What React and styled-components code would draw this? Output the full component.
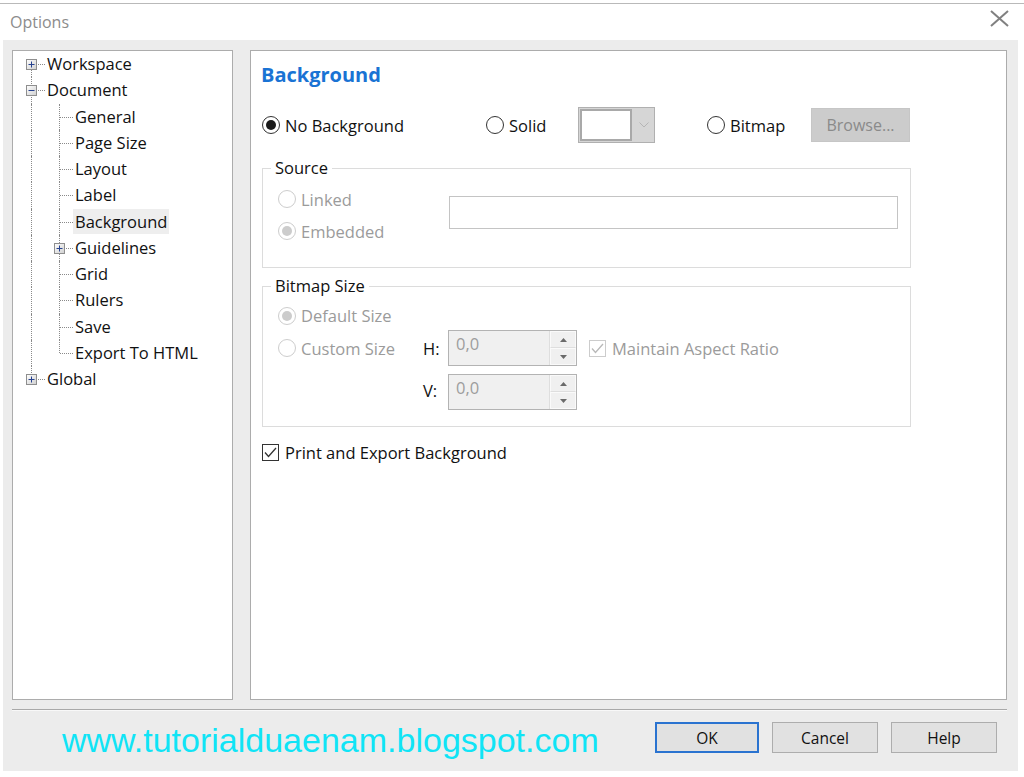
import React from 'react';
import styled, { createGlobalStyle } from 'styled-components';

const GlobalStyle = createGlobalStyle`
  html, body { margin: 0; padding: 0; background: #fff; }
  body { font-family: "Open Sans", "Noto Sans", sans-serif; color: #000; }
  * { box-sizing: border-box; }
`;

const Window = styled.div`
  width: 1024px;
  height: 777px;
  display: flex;
  flex-direction: column;
  background: #fff;
  overflow: hidden;
`;

const TopEdge = styled.div`
  height: 4px;
  border-bottom: 1px solid #b9b9b9;
`;

const TitleBar = styled.div`
  height: 36px;
  display: flex;
  align-items: center;
  justify-content: space-between;
  padding: 0 15px 0 10px;
`;

const Title = styled.span`
  font-size: 16px;
  color: #8c8c8c;
`;

const CloseButton = styled.span`
  display: flex;
  width: 19px;
  height: 17px;
  margin-top: -7px;
`;

const Body = styled.div`
  flex: 1;
  margin: 0 6px 6px 3px;
  background: #ececec;
  padding: 10px 11px 0 9px;
  display: flex;
  flex-direction: column;
`;

const Main = styled.div`
  display: flex;
  gap: 17px;
  height: 650px;
`;

const TreePanel = styled.div`
  width: 221px;
  background: #fff;
  border: 1px solid #acacac;
  padding: 0 0 0 4px;
  font-size: 16.5px;
`;

const TreeRow = styled.div`
  display: flex;
  align-items: stretch;
  height: 26.25px;
`;

const Guide = styled.div`
  position: relative;
  width: 28px;
  flex: none;
  &::before {
    content: '';
    position: absolute;
    left: 14px;
    top: 0;
    bottom: 0;
    border-left: 1px dotted #8a8a8a;
    display: ${(p) => (p.$line ? 'block' : 'none')};
  }
`;

const Connector = styled.div`
  position: relative;
  width: 28px;
  flex: none;
  &::before {
    content: '';
    position: absolute;
    left: 14px;
    top: ${(p) => (p.$first ? '50%' : '0')};
    bottom: ${(p) => (p.$last ? '50%' : '0')};
    border-left: 1px dotted #8a8a8a;
  }
  &::after {
    content: '';
    position: absolute;
    left: 15px;
    right: 0;
    top: 50%;
    border-top: 1px dotted #8a8a8a;
  }
`;

const Expander = styled.span`
  position: absolute;
  left: 9px;
  top: 50%;
  margin-top: -5px;
  width: 11px;
  height: 11px;
  z-index: 1;
  display: flex;
`;

const TreeLabel = styled.span`
  display: flex;
  align-items: center;
  height: 25px;
  padding: 0 2px;
  white-space: nowrap;
  background: ${(p) => (p.$selected ? '#eeeeee' : 'transparent')};
  color: #111;
`;

const ContentPanel = styled.div`
  flex: 1;
  background: #fff;
  border: 1px solid #acacac;
  padding: 10px 10px 0 11px;
  font-size: 16.5px;
  display: flex;
  flex-direction: column;
  align-items: flex-start;
`;

const Heading = styled.h2`
  margin: 0 0 0 -1px;
  font-size: 20px;
  line-height: 28px;
  font-weight: 700;
  color: #1a73d4;
`;

const OptionRow = styled.div`
  display: flex;
  align-items: center;
  height: 36px;
  margin-top: 18px;
`;

const RadioOption = styled.label`
  display: inline-flex;
  align-items: center;
  gap: 5px;
  width: ${(p) => (p.$width ? `${p.$width}px` : 'auto')};
  flex: none;
  color: ${(p) => (p.$disabled ? '#9b9b9b' : '#111')};
  white-space: nowrap;
`;

const RadioCircle = styled.span`
  width: 18px;
  height: 18px;
  border-radius: 50%;
  border: 1px solid ${(p) => (p.$disabled ? '#cdcdcd' : '#333')};
  background: #fff;
  display: flex;
  align-items: center;
  justify-content: center;
  flex: none;
  &::after {
    content: '';
    width: 10px;
    height: 10px;
    border-radius: 50%;
    background: ${(p) => (p.$disabled ? '#cccccc' : '#1a1a1a')};
    display: ${(p) => (p.$checked ? 'block' : 'none')};
  }
`;

const ColorCombo = styled.div`
  width: 77px;
  height: 36px;
  border: 1px solid #b0b0b0;
  background: #d6d6d6;
  display: flex;
  margin-right: 52px;
  flex: none;
`;

const Swatch = styled.span`
  width: 52px;
  margin: 1px;
  background: #fff;
  border: 2px solid #a9a9a9;
  box-shadow: inset 0 0 0 1px #fff;
`;

const ComboArrow = styled.span`
  flex: 1;
  display: flex;
  align-items: center;
  justify-content: center;
`;

const BrowseButton = styled.button`
  width: 99px;
  height: 34px;
  background: #cccccc;
  border: 1px solid #c6c6c6;
  color: #8a8a8a;
  font-family: inherit;
  font-size: 16px;
  padding: 0;
`;

const Group = styled.fieldset`
  width: 649px;
  margin: ${(p) => p.$mt}px 0 0 0;
  border: 1px solid #dcdcdc;
  padding: 5px 0 ${(p) => p.$pb}px 15px;
  min-width: 0;
`;

const Legend = styled.legend`
  padding: 0 4px;
  margin-left: -7px;
  line-height: 20px;
  color: #111;
`;

const SourceGrid = styled.div`
  display: grid;
  grid-template-columns: 171px 449px;
  grid-template-rows: 32px 32px;
  align-items: center;
`;

const PathInput = styled.div`
  grid-column: 2;
  grid-row: 1 / span 2;
  align-self: start;
  margin-top: 13px;
  height: 33px;
  border: 1px solid #c4c4c4;
  background: #fff;
`;

const SizeRow = styled.div`
  display: flex;
  align-items: center;
  height: ${(p) => p.$h}px;
  margin-top: ${(p) => p.$mt || 0}px;
  padding-left: ${(p) => p.$indent || 0}px;
`;

const AxisLabel = styled.span`
  width: 25px;
  flex: none;
  color: #111;
  margin-top: ${(p) => p.$mt || 0}px;
`;

const Spin = styled.div`
  width: 129px;
  height: 36px;
  border: 1px solid #b3b3b3;
  background: #f0f0f0;
  display: flex;
  flex: none;
`;

const SpinValue = styled.span`
  flex: 1;
  padding: 1px 0 0 7px;
  color: #9d9d9d;
`;

const SpinButtons = styled.span`
  width: 27px;
  display: flex;
  flex-direction: column;
  border-left: 1px solid #dedede;
`;

const SpinHalf = styled.span`
  flex: 1;
  display: flex;
  align-items: center;
  justify-content: center;
  border: 1px solid #fafafa;
  border-bottom-color: ${(p) => (p.$top ? '#dedede' : '#fafafa')};
`;

const CheckOption = styled.label`
  display: inline-flex;
  align-items: center;
  gap: 6px;
  margin-left: ${(p) => p.$ml || 0}px;
  color: ${(p) => (p.$disabled ? '#9b9b9b' : '#111')};
  white-space: nowrap;
`;

const CheckBox = styled.span`
  width: 17px;
  height: 17px;
  border: 1px solid ${(p) => (p.$disabled ? '#cccccc' : '#333')};
  background: #fff;
  display: flex;
  align-items: center;
  justify-content: center;
  flex: none;
`;

const PrintRow = styled.div`
  display: flex;
  align-items: center;
  height: 28px;
  margin-top: 11px;
`;

const Separator = styled.div`
  margin-top: 9px;
  border-top: 1px solid #a9a9a9;
  border-bottom: 1px solid #f8f8f8;
`;

const Footer = styled.div`
  display: flex;
  align-items: flex-start;
  padding: 11px 10px 0 50px;
  gap: 13px;
`;

const Watermark = styled.span`
  flex: 1;
  font-family: "Liberation Sans", Arial, sans-serif;
  font-size: 34px;
  line-height: 34px;
  color: #10e4f6;
  margin-top: 1px;
`;

const DialogButton = styled.button`
  width: ${(p) => p.$w}px;
  height: 31px;
  background: #e1e1e1;
  border: ${(p) => (p.$default ? '2px solid #2a73d0' : '1px solid #adadad')};
  font-family: inherit;
  font-size: 15.5px;
  color: #111;
  padding: 0;
`;

const Chevron = ({ color = '#b5b5b5' }) => (
  <svg width="10" height="6" viewBox="0 0 10 6">
    <polyline points="0.5,0.5 5,5 9.5,0.5" fill="none" stroke={color} strokeWidth="1" />
  </svg>
);

const Tri = ({ up }) => (
  <svg width="7" height="4" viewBox="0 0 7 4">
    <polygon points={up ? '0,4 7,4 3.5,0' : '0,0 7,0 3.5,4'} fill="#6a6a6a" />
  </svg>
);

const Check = ({ color }) => (
  <svg width="13" height="11" viewBox="0 0 13 11">
    <polyline points="1,5.5 4.5,9.5 12,1" fill="none" stroke={color} strokeWidth="1.3" />
  </svg>
);

const ExpanderIcon = ({ open }) => (
  <svg width="11" height="11" viewBox="0 0 11 11">
    <defs>
      <linearGradient id="exg" x1="0" y1="0" x2="1" y2="1">
        <stop offset="0" stopColor="#ffffff" />
        <stop offset="1" stopColor="#cfcfcf" />
      </linearGradient>
    </defs>
    <rect x="0.5" y="0.5" width="10" height="10" fill="url(#exg)" stroke="#8e8e8e" />
    <line x1="2.5" y1="5.5" x2="8.5" y2="5.5" stroke="#26418f" strokeWidth="1" />
    {!open && <line x1="5.5" y1="2.5" x2="5.5" y2="8.5" stroke="#26418f" strokeWidth="1" />}
  </svg>
);

const treeRows = [
  { label: 'Workspace', level: 0, exp: 'plus', first: true },
  { label: 'Document', level: 0, exp: 'minus' },
  { label: 'General', level: 1 },
  { label: 'Page Size', level: 1 },
  { label: 'Layout', level: 1 },
  { label: 'Label', level: 1 },
  { label: 'Background', level: 1, selected: true },
  { label: 'Guidelines', level: 1, exp: 'plus' },
  { label: 'Grid', level: 1 },
  { label: 'Rulers', level: 1 },
  { label: 'Save', level: 1 },
  { label: 'Export To HTML', level: 1, last: true },
  { label: 'Global', level: 0, exp: 'plus', last: true },
];

const Radio = ({ label, checked, disabled, width }) => (
  <RadioOption $width={width} $disabled={disabled}>
    <RadioCircle $checked={checked} $disabled={disabled} />
    {label}
  </RadioOption>
);

const SpinBox = ({ value }) => (
  <Spin>
    <SpinValue>{value}</SpinValue>
    <SpinButtons>
      <SpinHalf $top>
        <Tri up />
      </SpinHalf>
      <SpinHalf>
        <Tri />
      </SpinHalf>
    </SpinButtons>
  </Spin>
);

export default function App() {
  return (
    <Window>
      <GlobalStyle />
      <TopEdge />
      <TitleBar>
        <Title>Options</Title>
        <CloseButton>
          <svg width="19" height="17" viewBox="0 0 19 17">
            <line x1="1" y1="1" x2="18" y2="16" stroke="#808080" strokeWidth="2" />
            <line x1="18" y1="1" x2="1" y2="16" stroke="#808080" strokeWidth="2" />
          </svg>
        </CloseButton>
      </TitleBar>
      <Body>
        <Main>
          <TreePanel>
            {treeRows.map((r) => (
              <TreeRow key={r.label}>
                {r.level === 1 && <Guide $line />}
                <Connector $first={r.first} $last={r.last}>
                  {r.exp && (
                    <Expander>
                      <ExpanderIcon open={r.exp === 'minus'} />
                    </Expander>
                  )}
                </Connector>
                <TreeLabel $selected={r.selected}>{r.label}</TreeLabel>
              </TreeRow>
            ))}
          </TreePanel>
          <ContentPanel>
            <Heading>Background</Heading>
            <OptionRow>
              <Radio label="No Background" checked width={224} />
              <Radio label="Solid" width={92} />
              <ColorCombo>
                <Swatch />
                <ComboArrow>
                  <Chevron />
                </ComboArrow>
              </ColorCombo>
              <Radio label="Bitmap" width={104} />
              <BrowseButton>Browse...</BrowseButton>
            </OptionRow>
            <Group $mt={15} $pb={20}>
              <Legend>Source</Legend>
              <SourceGrid>
                <Radio label="Linked" disabled />
                <PathInput />
                <Radio label="Embedded" checked disabled />
              </SourceGrid>
            </Group>
            <Group $mt={8} $pb={16}>
              <Legend>Bitmap Size</Legend>
              <SizeRow $h={29}>
                <Radio label="Default Size" checked disabled />
              </SizeRow>
              <SizeRow $h={36}>
                <Radio label="Custom Size" disabled width={145} />
                <AxisLabel>H:</AxisLabel>
                <SpinBox value="0,0" />
                <CheckOption $disabled $ml={12}>
                  <CheckBox $disabled>
                    <Check color="#b8b8b8" />
                  </CheckBox>
                  Maintain Aspect Ratio
                </CheckOption>
              </SizeRow>
              <SizeRow $h={36} $mt={8} $indent={145}>
                <AxisLabel $mt={-3}>V:</AxisLabel>
                <SpinBox value="0,0" />
              </SizeRow>
            </Group>
            <PrintRow>
              <CheckOption>
                <CheckBox>
                  <Check color="#333" />
                </CheckBox>
                Print and Export Background
              </CheckOption>
            </PrintRow>
          </ContentPanel>
        </Main>
        <Separator />
        <Footer>
          <Watermark>www.tutorialduaenam.blogspot.com</Watermark>
          <DialogButton $w={104} $default>OK</DialogButton>
          <DialogButton $w={106}>Cancel</DialogButton>
          <DialogButton $w={106}>Help</DialogButton>
        </Footer>
      </Body>
    </Window>
  );
}
